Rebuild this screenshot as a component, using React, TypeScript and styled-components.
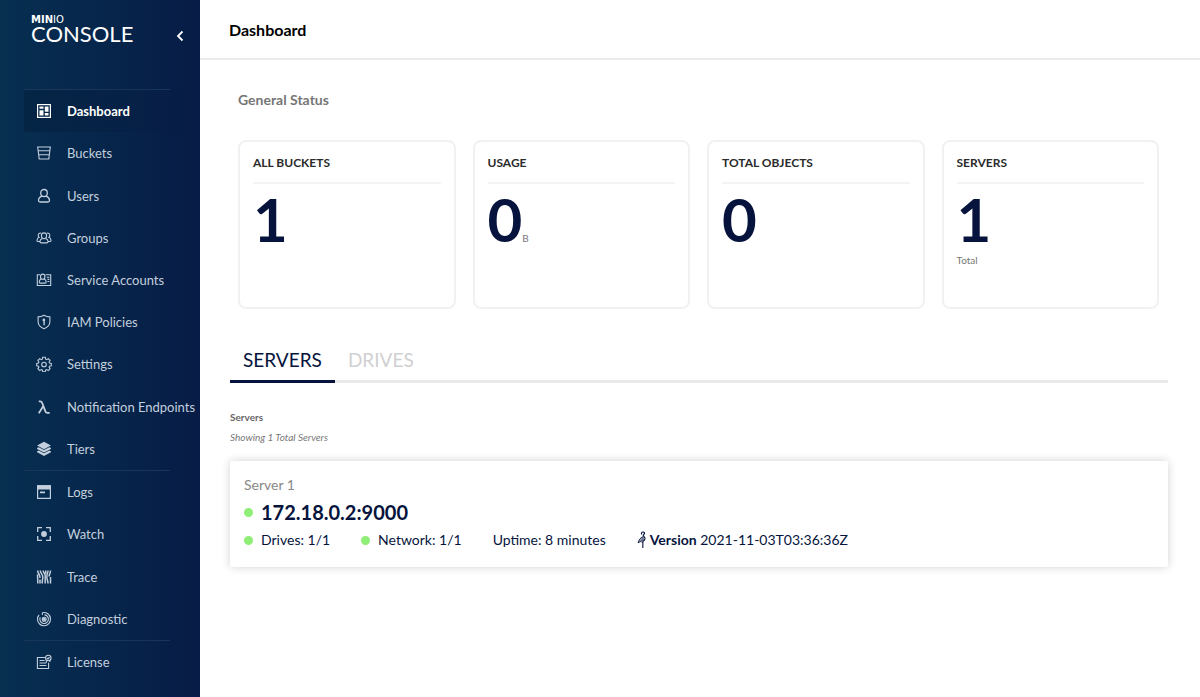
import React from "react";
import styled, { createGlobalStyle, css } from "styled-components";

const navy = "#06143d";

const GlobalStyle = createGlobalStyle`
  *, *::before, *::after { box-sizing: border-box; }
  body { margin: 0; background: #fff; font-family: Lato, "Liberation Sans", sans-serif; color: ${navy}; }
  h1, h2, h3, p, ul { margin: 0; padding: 0; }
  ul { list-style: none; }
  button { font: inherit; border: 0; background: none; padding: 0; cursor: pointer; }
`;

const Page = styled.div`
  display: flex;
  min-height: 100vh;
`;

const Sidebar = styled.aside`
  flex: 0 0 200px;
  background: linear-gradient(90deg, #062f50 0%, #071c46 100%);
`;

const Brand = styled.div`
  display: flex;
  justify-content: space-between;
  height: 89px;
  padding: 15px 14px 0 31px;
`;

const Logo = styled.div`
  display: flex;
  flex-direction: column;
  color: #fff;
`;

const LogoTop = styled.span`
  font: 700 10px/9px "DejaVu Sans", sans-serif;
  span { font-weight: 400; }
`;

const LogoName = styled.span`
  font-size: 22px;
  line-height: 20px;
`;

const CollapseButton = styled.button`
  display: flex;
  align-self: flex-start;
  margin-top: 13px;
  color: #fff;
`;

const NavGroup = styled.ul<{ $height: number }>`
  display: flex;
  flex-direction: column;
  min-height: ${(p) => p.$height}px;
  margin-left: 24px;
  li { display: flex; flex: 1; }
`;

const NavDivider = styled.hr`
  height: 1px;
  margin: 0 30px 0 24px;
  border: 0;
  background: #183659;
`;

const NavLink = styled.a<{ $active?: boolean }>`
  display: flex;
  flex: 1;
  align-items: center;
  gap: 15px;
  padding-left: 12px;
  color: #c3cfdd;
  font-size: 13px;
  line-height: 18px;
  white-space: nowrap;
  text-decoration: none;
  svg { flex: none; }
  ${(p) =>
    p.$active &&
    css`
      color: #fff;
      font-weight: 700;
      background: linear-gradient(90deg, rgba(0, 10, 35, 0.22), rgba(0, 10, 35, 0));
    `}
`;

const Main = styled.main`
  flex: 1;
  min-width: 0;
`;

const Header = styled.header`
  display: flex;
  align-items: center;
  height: 60px;
  padding: 2px 29px 0;
  border-bottom: 2px solid #ebebeb;
`;

const Title = styled.h1`
  color: #000;
  font-size: 16px;
  line-height: 20px;
`;

const Content = styled.div`
  padding: 30px 32px 30px 30px;
`;

const Status = styled.section`
  padding: 0 9px 0 8px;
`;

const StatusTitle = styled.h2`
  color: #767676;
  font-size: 14px;
  line-height: 20px;
`;

const Cards = styled.div`
  display: grid;
  grid-template-columns: repeat(4, 1fr);
  gap: 17px;
  margin-top: 30px;
`;

const Card = styled.article`
  min-height: 169px;
  padding: 12px 13px;
  border: 2px solid #f1f1f1;
  border-radius: 8px;
`;

const CardTitle = styled.h3`
  padding-bottom: 10px;
  border-bottom: 2px solid #f4f4f4;
  color: #2b2b2b;
  font-size: 12px;
  line-height: 18px;
`;

const CardValue = styled.p`
  margin-top: 5px;
  font-size: 60px;
  font-weight: 700;
  line-height: 60px;
`;

const Unit = styled.span`
  color: #777;
  font-size: 10px;
  font-weight: 400;
`;

const CardNote = styled.p`
  margin-top: 4px;
  color: #777;
  font-size: 10px;
  line-height: 14px;
`;

const Tabs = styled.div`
  display: flex;
  margin-top: 30px;
  border-bottom: 3px solid #eaeaea;
`;

const Tab = styled.button<{ $active?: boolean }>`
  height: 44px;
  margin-bottom: -3px;
  padding: 4px 13px 3px;
  border-bottom: 3px solid ${(p) => (p.$active ? navy : "transparent")};
  color: ${(p) => (p.$active ? navy : "#d0d0d0")};
  font-size: 19px;
  line-height: 24px;
`;

const ListTitle = styled.h2`
  margin-top: 26px;
  color: #666;
  font-size: 10px;
  line-height: 16px;
`;

const ListCount = styled.p`
  margin-top: 4px;
  color: #777;
  font-size: 10px;
  font-style: italic;
  line-height: 16px;
`;

const ServerCard = styled.article`
  margin-top: 16px;
  padding: 15px 14px 17px;
  border-radius: 2px;
  background: #fff;
  box-shadow: 0 0 10px rgba(0, 0, 0, 0.18);
`;

const ServerLabel = styled.p`
  color: #888;
  font-size: 14px;
  line-height: 18px;
`;

const ServerName = styled.h3`
  display: flex;
  align-items: center;
  gap: 8px;
  font-size: 20px;
  line-height: 36px;
`;

const Dot = styled.span`
  width: 9px;
  height: 9px;
  border-radius: 50%;
  background: #8fee75;
`;

const Facts = styled.ul`
  display: flex;
  gap: 31px;
  font-size: 14px;
  line-height: 20px;
`;

const Fact = styled.li<{ $gap?: number }>`
  display: flex;
  align-items: center;
  gap: ${(p) => p.$gap ?? 8}px;
`;

const Glyph = ({ children }: { children: React.ReactNode }) => (
  <svg width="16" height="16" viewBox="0 0 16 16" fill="none" stroke="currentColor" strokeWidth="1.1" aria-hidden="true">
    {children}
  </svg>
);

const icons: Record<string, React.ReactNode> = {
  Dashboard: (
    <>
      <rect x="1.6" y="1.6" width="12.8" height="12.8" strokeWidth="1.2" />
      <path d="M3.5 3.5h4v2.300h-4zM3.5 7.200h4v5.300h-4zM8.800 3.500h3.700v5.200H8.800zM8.800 10.100h3.700v2.400H8.800z" fill="currentColor" stroke="none" />
    </>
  ),
  Buckets: <path d="M1.7 2h12.6l-1.5 12H3.2zM2.2 5.8h11.6M2.7 9.8h10.6" />,
  Users: (
    <>
      <ellipse cx="8" cy="5" rx="3.3" ry="3.5" strokeWidth="1.3" />
      <path d="M5.900 8.200C3.700 9 2.500 10.700 2.500 12.500c0 1 .6 1.500 1.600 1.500h7.800c1 0 1.600-.5 1.600-1.500 0-1.800-1.200-3.500-3.400-4.300" strokeWidth="1.300" />
    </>
  ),
  Groups: (
    <>
      <ellipse cx="8" cy="5.8" rx="2.600" ry="2.900" />
      <path d="M6.200 8.400c-1.500.7-2.300 1.800-2.300 3.200 0 1 .5 1.300 1.300 1.300h5.600c.8 0 1.300-.3 1.300-1.300 0-1.400-.8-2.500-2.300-3.200M4.900 3.100c-1.700-.2-2.700.9-2.700 2.200 0 .9.3 1.600.9 2C1.700 7.900 1 9 1 10.400c0 .7.4 1.100 1 1.100h1.800M11.100 3.100c1.700-.2 2.700.9 2.700 2.200 0 .9-.3 1.600-.9 2 1.400.6 2.100 1.700 2.100 3.100 0 .7-.4 1.100-1 1.100h-1.800" />
    </>
  ),
  "Service Accounts": (
    <>
      <path d="M4 2.700H1.300v10.800h13.400V2.700H9.500M10.800 5.200h2.600M11.500 7.400h1.900M11.500 9.500h1.900" />
      <ellipse cx="6.700" cy="4.700" rx="2.200" ry="2.600" />
      <path d="M5.300 7c-1.400.6-2.100 1.600-2.100 2.900 0 .8.400 1.200 1.100 1.200h4.800c.7 0 1.100-.4 1.100-1.200 0-1.300-.7-2.300-2.100-2.900" />
    </>
  ),
  "IAM Policies": (
    <>
      <path d="M8 1.200c1.800 1.100 3.700 1.700 5.900 1.700v4.700c0 3.300-2 5.600-5.900 7.200-3.900-1.600-5.900-3.900-5.900-7.200V2.900C4.300 2.900 6.200 2.300 8 1.200z" />
      <circle cx="7.900" cy="5.900" r="1.300" fill="currentColor" stroke="none" />
      <path d="M8.100 6v5.300M6.700 6.100h1.400" strokeWidth="1.400" />
    </>
  ),
  Settings: (
    <>
      <path d="M6.700 1.300h2.600l.4 1.900 1 .4 1.600-1 1.800 1.800-1 1.600.4 1 1.800.4v2.300l-1.800.4-.4 1 1 1.600-1.800 1.900-1.600-1.100-1 .4-.4 1.800H6.700l-.4-1.800-1-.4-1.600 1.100-1.800-1.900 1-1.600-.4-1-1.800-.4V7.400l1.800-.4.4-1-1-1.600 1.800-1.800 1.600 1 1-.4z" />
      <circle cx="8" cy="8.500" r="2.300" />
    </>
  ),
  "Notification Endpoints": <path d="M2.800 2.300h1.400c1 0 1.500.4 1.900 1.500l3.300 8.600c.4 1.100.9 1.500 1.900 1.500h2.400M7.200 7.300L2.800 14.200" strokeWidth="1.800" />,
  Tiers: (
    <>
      <path d="M8 .8l6.900 3.700L8 8.200 1.100 4.500z" fill="currentColor" stroke="none" />
      <path d="M1.100 7l1.600-.8L8 9l5.300-2.800 1.600.8v.9L8 11.500 1.100 7.900zM1.100 10.300l1.600-.8L8 12.300l5.300-2.800 1.600.8v.9L8 14.900l-6.900-3.700z" fill="currentColor" stroke="none" />
    </>
  ),
  Logs: (
    <>
      <path d="M1.600 1.800h12.800v12.600H1.600z" strokeWidth="1.200" />
      <path d="M1 1.200h14v4.200H1zM4 7.500h5v1.800H4z" fill="currentColor" stroke="none" />
    </>
  ),
  Watch: (
    <>
      <path d="M1.700 6V1.700H6M10 1.700h4.300V6M14.300 10v4.300H10M6 14.300H1.700V10" strokeWidth="1.300" />
      <circle cx="8" cy="8" r="2.900" fill="currentColor" stroke="none" />
    </>
  ),
  Trace: (
    <path
      d="M1.600 1.500c0 3 2.300 3.500 2.300 6.500v1M4.300 1.500c0 3 2.500 3.300 2.500 6.500 0 2.600-.6 3-.6 6.500M7.200 1.500c0 2.500 2 3 2 5v2.200c0 2.300 0 3 0 5.800M9.700 1.500v3.200M12 1.500c0 2.800-1.100 2.800-1.100 5.800v1.200c0 2.200 1.100 3 1.100 6M14.500 1.500c0 3.300-1.400 3.300-1.400 6M14.500 8v6.500M1.500 5.500c0 2.500.3 3.500.3 9M4 10.500v4"
      strokeWidth="1.500"
    />
  ),
  Diagnostic: (
    <>
      <path d="M6.200 1.700c4-1 8.300 1.800 8.300 6.300a6.500 6.500 0 0 1-13 .5c-.1-1.800.5-3.400 1.600-4.500M6.400 1.700v2.400M8.500 3.900a4.300 4.300 0 1 1-4.200 2.300" />
      <circle cx="8.200" cy="8.200" r="2" />
      <circle cx="8.200" cy="8.200" r="1" fill="currentColor" />
    </>
  ),
  License: (
    <>
      <path d="M9 3.500H1.400v11h11.200V8.800M3.500 6.500h5M3.500 9h6.800M3.500 11.500h6.800" />
      <circle cx="12.300" cy="4" r="2.700" />
      <path d="M11.100 4l.9.900 1.500-1.700M10.300 6v2.800M13.900 6v2" />
    </>
  ),
};

const ReleaseIcon = () => (
  <svg width="10" height="18" viewBox="0 0 10 18" fill="none" stroke={navy} aria-hidden="true">
    <path d="M4.700 3.500C3.900 1.600 5.200.7 6.400 1c1.400.4 1.500 1.700.5 2.500-.9.800-1 1.300.2 2.200 1.500 1.200 1.100 3.400-1.200 4.600L5.800 17" strokeWidth="1.100" />
    <path d="M1 11.800C2 8.500 3.400 6.600 5.800 5.800c.9 1.700.4 3.600-1.700 4.600L1 11.800z" strokeWidth=".8" fill={navy} fillOpacity=".45" />
    <path d="M5.800 10.500l-1 1.500M6.400 1.700l1.200 1.200" strokeWidth=".8" />
  </svg>
);

const groups = [
  {
    height: 380,
    items: ["Dashboard", "Buckets", "Users", "Groups", "Service Accounts", "IAM Policies", "Settings", "Notification Endpoints", "Tiers"],
  },
  { height: 169, items: ["Logs", "Watch", "Trace", "Diagnostic"] },
  { height: 42, items: ["License"] },
];

const cards = [
  { title: "ALL BUCKETS", value: "1" },
  { title: "USAGE", value: "0", unit: "B" },
  { title: "TOTAL OBJECTS", value: "0" },
  { title: "SERVERS", value: "1", note: "Total" },
];

export default function App() {
  return (
    <>
      <GlobalStyle />
      <Page>
        <Sidebar>
          <Brand>
            <Logo>
              <LogoTop>MIN<span>IO</span></LogoTop>
              <LogoName>CONSOLE</LogoName>
            </Logo>
            <CollapseButton type="button" aria-label="Collapse menu">
              <svg width="12" height="16" viewBox="0 0 12 16" fill="none" stroke="currentColor" strokeWidth="1.800">
                <path d="M8.500 3.500L4 8l4.500 4.500" />
              </svg>
            </CollapseButton>
          </Brand>
          <nav>
            {groups.map((group) => (
              <React.Fragment key={group.items[0]}>
                <NavDivider />
                <NavGroup $height={group.height}>
                  {group.items.map((item) => (
                    <li key={item}>
                      <NavLink href="#" $active={item === "Dashboard"}>
                        <Glyph>{icons[item]}</Glyph>
                        {item}
                      </NavLink>
                    </li>
                  ))}
                </NavGroup>
              </React.Fragment>
            ))}
          </nav>
        </Sidebar>
        <Main>
          <Header>
            <Title>Dashboard</Title>
          </Header>
          <Content>
            <Status>
              <StatusTitle>General Status</StatusTitle>
              <Cards>
                {cards.map((card) => (
                  <Card key={card.title}>
                    <CardTitle>{card.title}</CardTitle>
                    <CardValue>
                      {card.value}
                      {card.unit && <Unit>{card.unit}</Unit>}
                    </CardValue>
                    {card.note && <CardNote>{card.note}</CardNote>}
                  </Card>
                ))}
              </Cards>
            </Status>
            <Tabs role="tablist">
              <Tab type="button" role="tab" aria-selected="true" $active>SERVERS</Tab>
              <Tab type="button" role="tab" aria-selected="false">DRIVES</Tab>
            </Tabs>
            <ListTitle>Servers</ListTitle>
            <ListCount>Showing 1 Total Servers</ListCount>
            <ServerCard>
              <ServerLabel>Server 1</ServerLabel>
              <ServerName><Dot />172.18.0.2:9000</ServerName>
              <Facts>
                <Fact><Dot />Drives: 1/1</Fact>
                <Fact><Dot />Network: 1/1</Fact>
                <Fact>Uptime: 8 minutes</Fact>
                <Fact $gap={3}><ReleaseIcon /><span><strong>Version</strong> 2021-11-03T03:36:36Z</span></Fact>
              </Facts>
            </ServerCard>
          </Content>
        </Main>
      </Page>
    </>
  );
}
